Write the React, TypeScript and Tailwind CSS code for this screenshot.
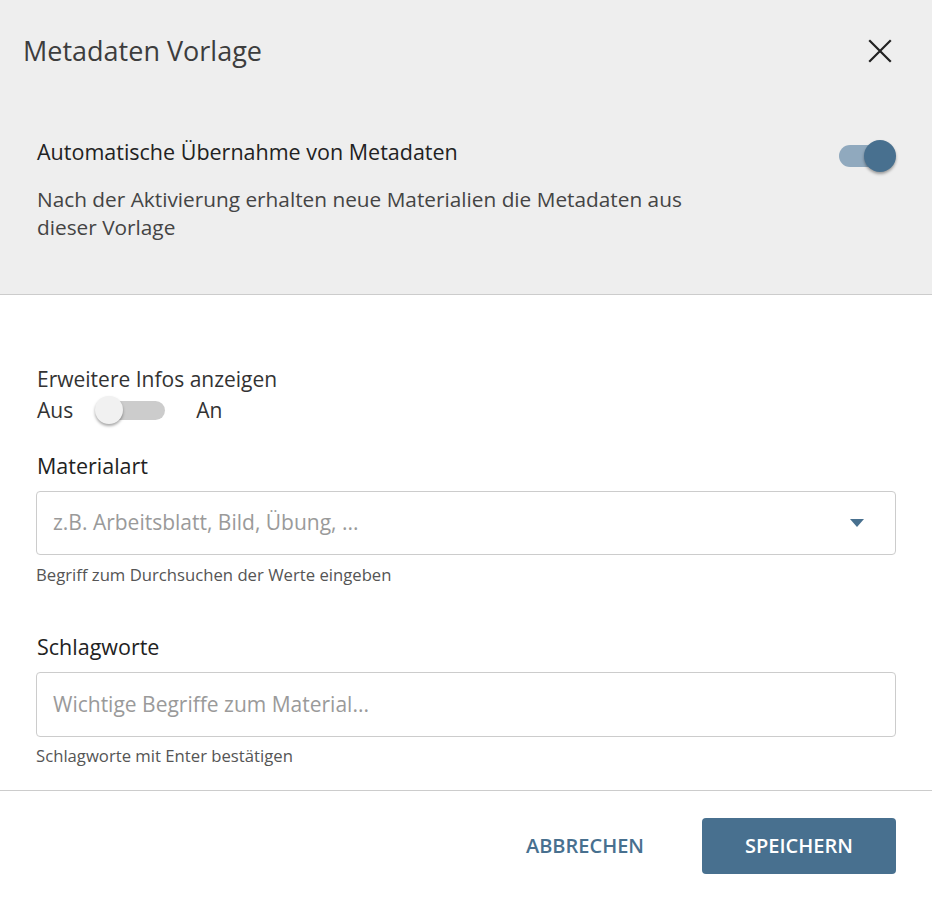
import React from 'react';

const App: React.FC = () => {
  return (
    <div className="w-[932px] h-[899px] bg-white flex flex-col font-['Open_Sans',sans-serif] text-[#333]">
      {/* Header */}
      <div className="bg-[#eeeeee] h-[295px] shrink-0 border-b border-[#cccccc] flex flex-col">
        <div className="flex items-center justify-between pl-[23px] pr-[40px] pt-[33px]">
          <h2 className="text-[27px] font-normal text-[#3d3d3d] leading-[36px]">Metadaten Vorlage</h2>
          <button className="text-[#222]">
            <svg width="24" height="24" viewBox="0 0 24 24" fill="none" stroke="currentColor" strokeWidth="2.2" strokeLinecap="square">
              <path d="M2 2 L22 22 M22 2 L2 22" />
            </svg>
          </button>
        </div>
        <div className="flex items-start justify-between pl-[37px] pr-[36px] mt-[69px]">
          <div className="flex flex-col">
            <span className="text-[21.5px] font-medium text-[#222] leading-[28px]">Automatische Übernahme von Metadaten</span>
            <p className="text-[20.8px] text-[#444] leading-[28px] mt-[19px] w-[660px]">
              Nach der Aktivierung erhalten neue Materialien die Metadaten aus dieser Vorlage
            </p>
          </div>
          <div className="relative w-[57px] h-[32px] mt-[2px]">
            <div className="absolute left-0 top-[5px] w-[42px] h-[22px] rounded-full bg-[#90a9be]" />
            <div className="absolute right-0 top-0 w-[32px] h-[32px] rounded-full bg-[#48708f] shadow-[0_2px_3px_rgba(0,0,0,0.35)]" />
          </div>
        </div>
      </div>

      {/* Body */}
      <div className="flex flex-col pl-[36px] pr-[36px] pt-[70px] flex-1">
        <span className="text-[21px] text-[#333] leading-[28px] pl-[1px]">Erweitere Infos anzeigen</span>
        <div className="flex items-center h-[30px] pl-[1px] mt-[2px]">
          <span className="text-[21px] text-[#333] leading-[28px]">Aus</span>
          <div className="relative w-[70px] h-[30px] ml-[22px]">
            <div className="absolute left-[2px] top-[6px] w-[68px] h-[19px] rounded-full bg-[#cccccc]" />
            <div className="absolute left-0 top-[1px] w-[28px] h-[28px] rounded-full bg-[#f1f1f1] shadow-[0_2px_3px_rgba(0,0,0,0.35)]" />
          </div>
          <span className="text-[21px] text-[#333] leading-[28px] ml-[31px]">An</span>
        </div>

        <label className="text-[21.5px] font-medium text-[#222] leading-[28px] mt-[27px] pl-[1px]">Materialart</label>
        <div className="mt-[11px] h-[64px] border border-[#cccccc] rounded-[4px] flex items-center justify-between pl-[16px] pr-[31px]">
          <span className="text-[21px] text-[#9a9a9a]">z.B. Arbeitsblatt, Bild, Übung, ...</span>
          <svg width="14" height="8" viewBox="0 0 14 8">
            <path d="M0 0 L14 0 L7 8 Z" fill="#48708f" />
          </svg>
        </div>
        <span className="text-[16.7px] text-[#555] mt-[9px] leading-[22px]">Begriff zum Durchsuchen der Werte eingeben</span>

        <label className="text-[21.5px] font-medium text-[#222] leading-[28px] mt-[47px] pl-[1px]">Schlagworte</label>
        <div className="mt-[11px] h-[65px] border border-[#cccccc] rounded-[4px] flex items-center pl-[16px]">
          <span className="text-[21px] text-[#9a9a9a]">Wichtige Begriffe zum Material...</span>
        </div>
        <span className="text-[16.7px] text-[#555] mt-[8px] leading-[22px]">Schlagworte mit Enter bestätigen</span>
      </div>

      {/* Footer */}
      <div className="border-t border-[#cccccc] h-[109px] shrink-0 flex items-start justify-end pr-[36px] pt-[27px] gap-[58px]">
        <button className="h-[56px] text-[20px] font-semibold text-[#48708f]">ABBRECHEN</button>
        <button className="w-[194px] h-[56px] rounded-[4px] bg-[#48708f] text-white text-[20px] font-semibold">SPEICHERN</button>
      </div>
    </div>
  );
};

export default App;
